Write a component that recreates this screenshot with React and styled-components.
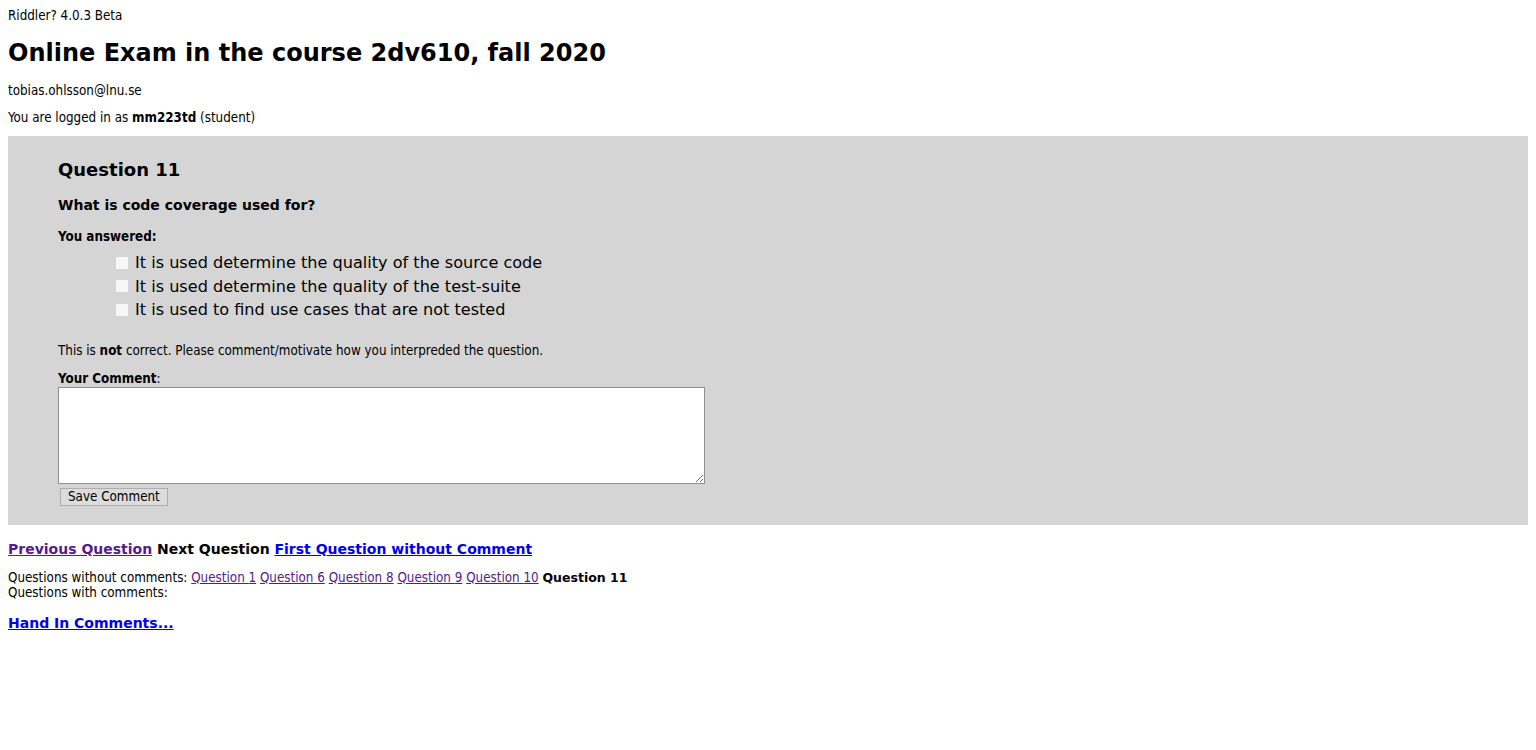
import React from 'react';
import styled, { createGlobalStyle } from 'styled-components';

const GlobalStyle = createGlobalStyle`
  body {
    margin: 8px;
    background: #fff;
    color: #000;
    font-family: 'DejaVu Sans Condensed', 'DejaVu Sans', sans-serif;
    font-size: 13.3px;
  }
`;

const Version = styled.div`
  line-height: 16px;
`;

const Title = styled.h1`
  margin: 13px 0 0;
  font-family: 'DejaVu Sans', sans-serif;
  font-size: 24px;
  line-height: 32px;
  font-weight: bold;
`;

const Line = styled.div`
  margin-top: ${(p) => p.gap || 0}px;
  line-height: 16px;
`;

const Panel = styled.div`
  margin-top: 10px;
  background: #d5d5d5;
  padding: 22px 50px 19px;
`;

const QuestionTitle = styled.h2`
  margin: 0;
  font-family: 'DejaVu Sans', sans-serif;
  font-size: 18px;
  line-height: 24px;
`;

const QuestionText = styled.h3`
  margin: 13px 0 0;
  font-family: 'DejaVu Sans', sans-serif;
  font-size: 14px;
  line-height: 20px;
`;

const Label = styled.div`
  margin-top: ${(p) => p.gap || 0}px;
  font-weight: bold;
  line-height: 17px;
`;

const AnswerList = styled.ul`
  list-style: none;
  margin: 6px 0 0;
  padding: 0 0 0 58px;
`;

const Answer = styled.li`
  display: flex;
  align-items: center;
  gap: 7px;
  height: 23.5px;
  font-family: 'DejaVu Sans', sans-serif;
  font-size: 16.1px;
`;

const Check = styled.input`
  appearance: none;
  margin: 0;
  width: 12px;
  height: 12px;
  background: #f7f7f7;
  border: none;
`;

const Feedback = styled.p`
  margin: 21px 0 0;
  line-height: 16px;
`;

const CommentBox = styled.textarea`
  display: block;
  box-sizing: border-box;
  width: 647px;
  height: 97px;
  margin: 0;
  border: 1px solid #8f8f8f;
  background: #fff;
`;

const SaveButton = styled.button`
  display: block;
  margin: 4px 0 0 2px;
  height: 18px;
  padding: 0 7px;
  font-family: 'DejaVu Sans Condensed', 'DejaVu Sans', sans-serif;
  font-size: 13.3px;
  color: #000;
  background: #dcdcdc;
  border: 1px solid #adadad;
`;

const Nav = styled.div`
  margin-top: 14px;
  line-height: 20px;
  font-family: 'DejaVu Sans', sans-serif;
  font-size: 14px;
  font-weight: bold;
`;

const Link = styled.a`
  color: ${(p) => (p.visited ? '#551a8b' : '#0000ee')};
  text-decoration: underline;
  cursor: pointer;
`;

const QuestionLists = styled.div`
  margin-top: 11px;
  line-height: 15px;
`;

const Current = styled.b`
  font-family: 'DejaVu Sans', sans-serif;
  font-size: 12.5px;
`;

const HandIn = styled(Nav)`
  margin-top: 13px;
`;

const answers = [
  'It is used determine the quality of the source code',
  'It is used determine the quality of the test-suite',
  'It is used to find use cases that are not tested',
];

const uncommented = [1, 6, 8, 9, 10];

export default function App() {
  return (
    <>
      <GlobalStyle />
      <Version>Riddler? 4.0.3 Beta</Version>
      <Title>Online Exam in the course 2dv610, fall 2020</Title>
      <Line gap={14}>tobias.ohlsson@lnu.se</Line>
      <Line gap={11}>
        You are logged in as <b>mm223td</b> (student)
      </Line>

      <Panel>
        <QuestionTitle>Question 11</QuestionTitle>
        <QuestionText>What is code coverage used for?</QuestionText>
        <Label gap={13}>You answered:</Label>
        <AnswerList>
          {answers.map((a) => (
            <Answer key={a}>
              <Check type="checkbox" disabled />
              {a}
            </Answer>
          ))}
        </AnswerList>
        <Feedback>
          This is <b>not</b> correct. Please comment/motivate how you interpreded the question.
        </Feedback>
        <Label gap={11}>
          Your Comment<span style={{ fontWeight: 'normal' }}>:</span>
        </Label>
        <CommentBox />
        <SaveButton>Save Comment</SaveButton>
      </Panel>

      <Nav>
        <Link visited>Previous Question</Link> Next Question{' '}
        <Link>First Question without Comment</Link>
      </Nav>
      <QuestionLists>
        <div>
          Questions without comments:&nbsp;
          {uncommented.map((n) => (
            <React.Fragment key={n}>
              <Link visited>Question {n}</Link>{' '}
            </React.Fragment>
          ))}
          <Current>Question 11</Current>
        </div>
        <div>Questions with comments:</div>
      </QuestionLists>
      <HandIn>
        <Link>Hand In Comments...</Link>
      </HandIn>
    </>
  );
}
